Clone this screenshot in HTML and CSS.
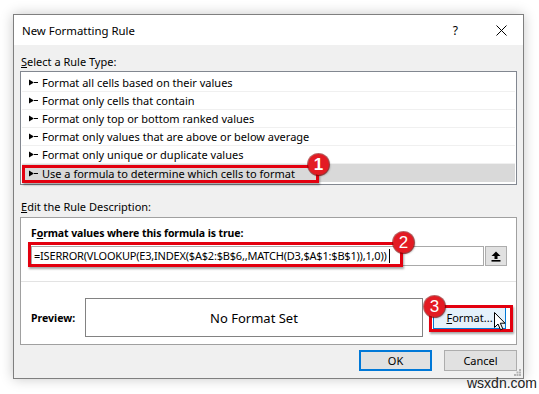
FILE: index.html
```html
<!DOCTYPE html>
<html lang="en">

<head>
    <meta charset="UTF-8">
    <title>New Formatting Rule</title>
    <link rel="stylesheet" href="styles.css">
</head>

<body>
    <div class="dialog">
        <div class="titlebar">
            <span class="title">New Formatting Rule</span>
            <span class="help">?</span>
            <svg class="close" width="11" height="11" viewBox="0 0 11 11">
                <path d="M0.5 0.5 L10.5 10.5 M10.5 0.5 L0.5 10.5" stroke="#000" stroke-width="1" />
            </svg>
        </div>

        <div class="content">
            <div class="label"><u>S</u>elect a Rule Type:</div>
            <ul class="rule-list">
                <li><svg class="pointer" width="9" height="7" viewBox="0 0 9 7"><path d="M0 0.5 L0 6.5 L5 3.5 Z M4 3 H9 V4 H4 Z" fill="#000" /></svg>Format all cells based on their values</li>
                <li><svg class="pointer" width="9" height="7" viewBox="0 0 9 7"><path d="M0 0.5 L0 6.5 L5 3.5 Z M4 3 H9 V4 H4 Z" fill="#000" /></svg>Format only cells that contain</li>
                <li><svg class="pointer" width="9" height="7" viewBox="0 0 9 7"><path d="M0 0.5 L0 6.5 L5 3.5 Z M4 3 H9 V4 H4 Z" fill="#000" /></svg>Format only top or bottom ranked values</li>
                <li><svg class="pointer" width="9" height="7" viewBox="0 0 9 7"><path d="M0 0.5 L0 6.5 L5 3.5 Z M4 3 H9 V4 H4 Z" fill="#000" /></svg>Format only values that are above or below average</li>
                <li><svg class="pointer" width="9" height="7" viewBox="0 0 9 7"><path d="M0 0.5 L0 6.5 L5 3.5 Z M4 3 H9 V4 H4 Z" fill="#000" /></svg>Format only unique or duplicate values</li>
                <li class="selected">
                    <svg class="pointer" width="9" height="7" viewBox="0 0 9 7"><path d="M0 0.5 L0 6.5 L5 3.5 Z M4 3 H9 V4 H4 Z" fill="#000" /></svg>Use a formula to determine which cells to format
                    <span class="mark mark-rule"></span>
                    <span class="badge badge-rule">1</span>
                </li>
            </ul>

            <div class="label label-edit"><u>E</u>dit the Rule Description:</div>
            <div class="desc">
                <div class="desc-top">
                    <div class="desc-title">F<u>o</u>rmat values where this formula is true:</div>
                    <div class="formula-row">
                        <div class="formula">=ISERROR(VLOOKUP(E3,INDEX($A$2:$B$6,,MATCH(D3,$A$1:$B$1)),1,0))<span class="caret"></span></div>
                        <div class="ref-btn">
                            <svg width="10" height="11" viewBox="0 0 10 11">
                                <path d="M5 0.5 L9.5 5 L6.5 5 L6.5 8 L3.5 8 L3.5 5 L0.5 5 Z" fill="#000" />
                                <rect x="0.5" y="9" width="9" height="1.6" fill="#000" />
                            </svg>
                        </div>
                        <span class="mark mark-formula"></span>
                        <span class="badge badge-formula">2</span>
                    </div>
                </div>
                <div class="desc-bottom">
                    <span class="preview-label">Preview:</span>
                    <div class="preview">No Format Set</div>
                    <div class="format-wrap">
                        <div class="format-btn"><u>F</u>ormat...</div>
                        <span class="mark mark-format"></span>
                        <span class="badge badge-format">3</span>
                        <svg class="cursor" width="13" height="19" viewBox="0 0 13 19">
                            <path d="M0.5 0.5 L0.5 15.5 L4 12 L6.5 17.8 L8.8 16.8 L6.3 11.2 L11 11.2 Z" fill="#fff" stroke="#000" stroke-width="1" stroke-linejoin="miter" />
                        </svg>
                    </div>
                </div>
            </div>

            <div class="actions">
                <div class="btn btn-default">OK</div>
                <div class="btn">Cancel</div>
            </div>
        </div>

        <svg class="grip" width="7" height="7" viewBox="0 0 7 7">
            <rect x="5" y="0" width="2" height="2" fill="#b4b4b4" />
            <rect x="2.5" y="2.5" width="2" height="2" fill="#b4b4b4" />
            <rect x="5" y="2.5" width="2" height="2" fill="#b4b4b4" />
            <rect x="0" y="5" width="2" height="2" fill="#b4b4b4" />
            <rect x="2.5" y="5" width="2" height="2" fill="#b4b4b4" />
            <rect x="5" y="5" width="2" height="2" fill="#b4b4b4" />
        </svg>
    </div>

    <div class="watermark">wsxdn.com</div>
</body>

</html>
```

FILE: styles.css
```css
* {
    margin: 0;
    padding: 0;
    box-sizing: border-box;
}

body {
    font-family: 'Segoe UI', 'Noto Sans', sans-serif;
    font-size: 11px;
    color: #000;
    background: #fff;
    padding: 14px 0 0 13px;
    width: 539px;
    height: 394px;
    overflow: hidden;
    position: relative;
}

.dialog {
    position: relative;
    width: 511px;
    height: 365px;
    background: #f0f0f0;
    border: 1px solid #7f7f7f;
    box-shadow: 0 0 12px rgba(0, 0, 0, 0.22);
}

/* title bar */
.titlebar {
    height: 30px;
    background: #fff;
    display: flex;
    align-items: center;
    padding-left: 8px;
}

.title {
    flex: 1;
    font-size: 11.4px;
}

.help {
    margin-right: 38px;
    font-size: 12px;
}

.close {
    margin-right: 16px;
}

.content {
    padding: 0 6px;
}

.label {
    margin-top: 9px;
    margin-bottom: 1px;
    padding-left: 1px;
    height: 16px;
    line-height: 16px;
}

.label-edit {
    margin-top: 14px;
    margin-bottom: 2px;
}

/* rule type list */
.rule-list {
    list-style: none;
    background: #fff;
    border: 1px solid #828790;
    padding: 2px 1px;
    height: 114px;
}

.rule-list li {
    position: relative;
    height: 18px;
    line-height: 17px;
    border-bottom: 1px solid #f0f0f0;
    padding-left: 7px;
    display: flex;
    align-items: center;
    white-space: nowrap;
}

.rule-list li.selected {
    background: #d9d9d9;
    border-bottom: none;
}

.pointer {
    margin-right: 4px;
    flex-shrink: 0;
}

/* description group */
.desc {
    background: #fff;
    border: 1px solid #a0a0a0;
}

.desc-top {
    height: 64px;
    padding: 7px 9px 0 10px;
    border-bottom: 1px solid #e3e3e3;
}

.desc-title {
    font-weight: 700;
    font-size: 10.5px;
    letter-spacing: -0.1px;
    height: 16px;
    line-height: 16px;
}

.formula-row {
    position: relative;
    display: flex;
    margin-top: 5px;
    height: 20px;
}

.formula {
    flex: 1;
    border: 1px solid #a9a9a9;
    padding-left: 2px;
    line-height: 18px;
    letter-spacing: -0.2px;
    white-space: nowrap;
    overflow: hidden;
}

.caret {
    display: inline-block;
    width: 1px;
    height: 14px;
    background: #000;
    vertical-align: -3px;
    margin-left: 2px;
}

.ref-btn {
    width: 22px;
    margin-left: 1px;
    background: #e1e1e1;
    border: 1px solid #adadad;
    display: flex;
    align-items: center;
    justify-content: center;
}

.desc-bottom {
    height: 62px;
    display: flex;
    align-items: center;
    padding: 16px 0 7px 10px;
}

.preview-label {
    width: 54px;
    font-weight: 700;
    font-size: 10.5px;
}

.preview {
    width: 338px;
    height: 39px;
    border: 1px solid #828282;
    display: flex;
    align-items: center;
    justify-content: center;
    font-size: 13px;
}

.format-wrap {
    position: relative;
    margin-left: 10px;
}

.format-btn {
    width: 73px;
    height: 22px;
    line-height: 20px;
    text-align: center;
    background: #e5f1fb;
    border: 1px solid #0078d7;
}

/* dialog buttons */
.actions {
    display: flex;
    justify-content: flex-end;
    gap: 12px;
    margin-top: 5px;
}

.btn {
    width: 73px;
    height: 21px;
    line-height: 19px;
    text-align: center;
    background: #e1e1e1;
    border: 1px solid #adadad;
}

.btn-default {
    border: 2px solid #0078d7;
    line-height: 17px;
}

.grip {
    position: absolute;
    right: 2px;
    bottom: 2px;
}

/* annotation marks */
.mark {
    position: absolute;
    border: 3px solid #e3000f;
    box-shadow: 1px 2px 2px rgba(0, 0, 0, 0.35);
}

.mark-rule {
    left: 0;
    top: 1px;
    width: 297px;
    height: 18px;
}

.mark-formula {
    left: -3px;
    top: -4px;
    width: 375px;
    height: 25px;
}

.mark-format {
    left: -4px;
    top: -2px;
    width: 84px;
    height: 27px;
}

.badge {
    position: absolute;
    width: 21px;
    height: 21px;
    border-radius: 50%;
    background: #e31b23;
    color: #fff;
    font-family: 'Liberation Sans', Arial, sans-serif;
    font-size: 17px;
    line-height: 21px;
    text-align: center;
    box-shadow: 0 0 0 1px rgba(140, 0, 0, 0.6), 1px 1px 2px rgba(0, 0, 0, 0.4);
}

.badge-rule {
    left: 286px;
    top: -10px;
    font-weight: 700;
}

.badge-formula {
    left: 362px;
    top: -14px;
}

.badge-format {
    left: -9px;
    top: -11px;
}

.cursor {
    position: absolute;
    left: 61px;
    top: 5px;
}

.watermark {
    position: absolute;
    left: 467px;
    top: 375px;
    font-family: 'Liberation Sans', Arial, sans-serif;
    font-size: 14px;
    color: #222;
}
```
